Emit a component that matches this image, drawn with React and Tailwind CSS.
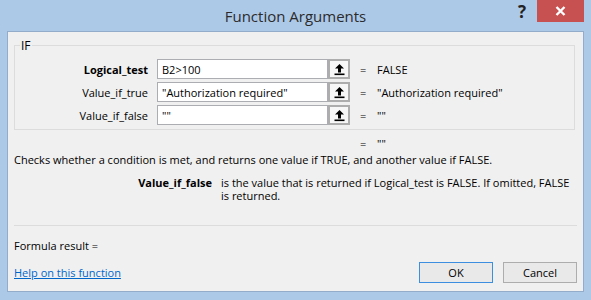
import React from 'react'

const font = { fontFamily: '"Open Sans", "Noto Sans", sans-serif' }

const PickButton = () => (
  <div className="w-[22px] h-[20px] border-2 border-[#adadad] bg-[#f7f7f7] flex items-center justify-center">
    <svg width="11" height="13" viewBox="0 0 11 13">
      <path d="M5.5 1 L10 5.5 L7 5.5 L7 9.5 L4 9.5 L4 5.5 L1 5.5 Z" fill="#000" />
      <rect x="0.5" y="10.5" width="10" height="1.6" fill="#000" />
    </svg>
  </div>
)

const ArgRow = ({ label, value, result, bold }) => (
  <div className="flex items-center h-[20px]">
    <div className={`w-[133px] text-right text-black ${bold ? 'font-bold' : ''}`}>{label}</div>
    <div className="ml-[9px] w-[171px] h-[20px] bg-white border border-[#abadb3] flex items-center pl-[4px]">
      {value}
    </div>
    <PickButton />
    <div className="ml-[10px] w-[17px]">=</div>
    <div>{result}</div>
  </div>
)

export default function App() {
  return (
    <div className="w-[591px] h-[300px] bg-[#adc9e8] flex flex-col text-[11px] leading-[15px] text-black" style={font}>
      {/* title bar */}
      <div className="h-[31px] grid grid-cols-[1fr_auto_1fr]">
        <div />
        <div className="pt-[6px] text-[15px] leading-[20px] text-[#2b2b2b]">Function Arguments</div>
        <div className="flex justify-end items-start pr-[7px]">
          <div className="mt-[3px] mr-[11px] text-[17px] leading-[18px] font-bold text-[#222]">?</div>
          <div className="w-[47px] h-[22px] bg-[#c75050] flex items-center justify-center">
            <svg width="11" height="10" viewBox="0 0 11 10">
              <path d="M1.5 1 L9.5 9 M9.5 1 L1.5 9" stroke="#fff" strokeWidth="2.4" />
            </svg>
          </div>
        </div>
      </div>

      {/* client area */}
      <div className="mx-[7px] mb-[8px] flex-1 bg-[#f0f0f0] border border-[#93acca] px-[6px] flex flex-col">
        <fieldset className="mt-[6px] mr-[2px] border border-[#dcdcdc] pb-[4px]">
          <legend className="ml-[5px] px-[1px] text-[12px]">IF</legend>
          <div className="flex flex-col gap-[3px] pt-[6px]">
            <ArgRow label="Logical_test" bold value="B2>100" result="FALSE" />
            <ArgRow label="Value_if_true" value={'"Authorization required"'} result={'"Authorization required"'} />
            <ArgRow label="Value_if_false" value={'""'} result={'""'} />
          </div>
        </fieldset>

        <div className="mt-[6px] flex">
          <div className="ml-[346px] w-[17px]">=</div>
          <div>""</div>
        </div>

        <div className="mt-[1px]">
          Checks whether a condition is met, and returns one value if TRUE, and another value if FALSE.
        </div>

        <div className="mt-[9px] flex leading-[13px]">
          <div className="w-[198px] text-right font-bold">Value_if_false</div>
          <div className="ml-[9px] w-[352px]">
            is the value that is returned if Logical_test is FALSE. If omitted, FALSE is returned.
          </div>
        </div>

        <div className="mt-[23px] h-px bg-[#dcdcdc]" />

        <div className="mt-[12px]">Formula result =</div>

        <div className="mt-[9px] flex items-center">
          <a className="text-[#0066cc] underline flex-1" href="#">Help on this function</a>
          <button className="w-[74px] h-[21px] border border-[#3c8fe0] bg-[#e9e9e9]">OK</button>
          <button className="ml-[10px] w-[74px] h-[21px] border border-[#adadad] bg-[#e9e9e9]">Cancel</button>
        </div>
      </div>
    </div>
  )
}
